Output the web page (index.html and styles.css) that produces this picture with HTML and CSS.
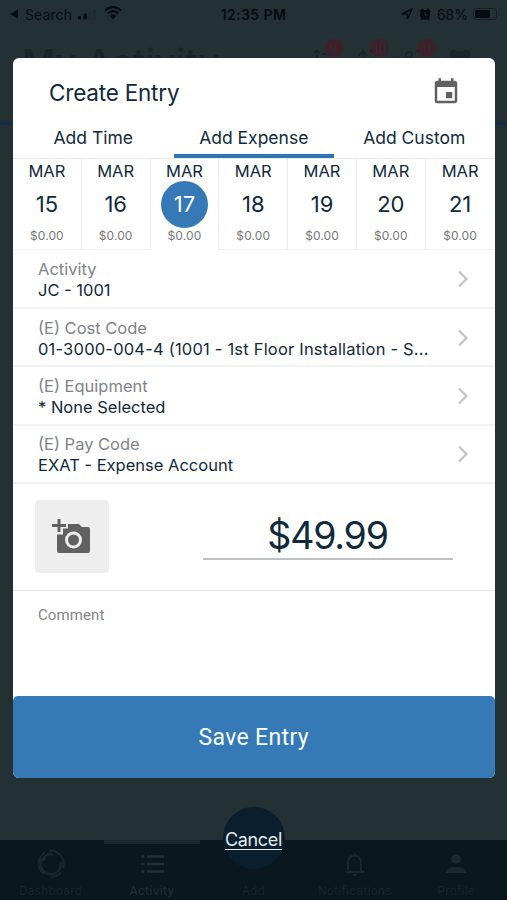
FILE: index.html
```html
<!DOCTYPE html>
<html lang="en">
<head>
<meta charset="utf-8">
<title>Create Entry</title>
<link rel="stylesheet" href="styles.css">
</head>
<body>
<div class="screen">
  <header class="status">
    <div class="status-left">
      <svg width="8" height="10" viewBox="0 0 8 10"><path d="M8 .5v9L0 5z"/></svg>
      <span class="back">Search</span>
      <svg class="signal" width="18" height="10" viewBox="0 0 18 10"><rect y="6" width="3.2" height="3.5" rx="1"/><rect x="5.5" y="3.5" width="3.5" height="6" rx="1"/><path opacity=".12" d="M10.5 2h3v7.500h-3zM15 0h3v9.500h-3z"/></svg>
      <svg class="wifi" width="18" height="14" viewBox="0 0 18 14"><path d="M1 4.500Q9-2.500 17 4.500M3.800 7.500Q9 2.700 14.200 7.500" fill="none" stroke="#070c0e" stroke-width="2.200"/><path d="M5.700 9.800Q9 6.800 12.300 9.800L9 13.500z"/></svg>
    </div>
    <div class="clock">12:35 PM</div>
    <div class="status-right">
      <svg width="12" height="12" viewBox="0 0 12 12"><path d="M1 6L11 1 6.500 11V6z" fill="none" stroke="#070c0e" stroke-width="1.500"/></svg>
      <svg class="alarm" width="12" height="13" viewBox="0 0 12 13"><circle cx="6" cy="7" r="5"/><path d="M1 4L4 1M8 1l3 3M3 10.500L2 12M9 10.500l1 1.500" stroke="#070c0e" stroke-width="2"/><path d="M6 4v3h2.500" fill="none" stroke="#243034"/></svg>
      <span class="percent">68%</span>
      <svg width="27" height="12" viewBox="0 0 27 12"><rect x=".5" y=".5" width="23" height="11" rx="3" fill="none" stroke="#162023"/><rect x="2" y="2" width="15" height="8" rx="1.500"/><path d="M25 4q2 2 0 4z" fill="#162023"/></svg>
    </div>
  </header>

  <section class="page-head">
    <h1>My Activity</h1>
    <div class="tools">
      <div class="tool"><svg width="24" height="24" viewBox="0 0 24 24"><path d="M3 6l3-3 3 3M6 3v9M11 7h5"/></svg><b>9</b></div>
      <div class="tool"><svg width="24" height="24" viewBox="0 0 24 24"><path d="M2 9l4-5 4 5M6 5v7M13 4h5"/></svg><b>10</b></div>
      <div class="tool"><svg width="24" height="24" viewBox="0 0 24 24"><circle cx="5" cy="8" r="3"/><path d="M13 4h5"/></svg><b>11</b></div>
      <div class="tool"><svg width="24" height="24" viewBox="0 0 24 24"><path class="solid" d="M0 5q3-4 6-1h7q4-3 7 1v8H0z"/></svg></div>
    </div>
  </section>
  <main class="page-body"></main>

  <nav class="nav">
    <div class="nav-item"><svg width="32" height="32" viewBox="0 0 32 32"><path d="M9 26A13 13 0 0 1 10 4.500M14 3A13 13 0 0 1 28 20M26 24A13 13 0 0 1 16 29"/><path d="M18 6.500A10 10 0 1 0 25.500 14M10 9L8 13"/></svg><span>Dashboard</span></div>
    <div class="nav-item active"><svg width="32" height="32" viewBox="0 0 32 32"><path d="M11 8.500h17M11 16h17M11 23.500h17M5.500 8.500h3M5.500 16h3M5.500 23.500h3"/></svg><span>Activity</span></div>
    <div class="nav-item"><svg width="32" height="32"></svg><span>Add</span></div>
    <div class="nav-item"><svg width="32" height="32" viewBox="0 0 32 32"><path d="M6 24h19M9 23V15q0-7.500 6.500-7.500T22 15v8M15.500 5v2M13.500 27h4"/></svg><span>Notifications</span></div>
    <div class="nav-item"><svg width="32" height="32" viewBox="0 0 32 32"><g class="solid"><circle cx="16" cy="11" r="4.800"/><path d="M6 25q0-6 10-6t10 6z"/></g></svg><span>Profile</span></div>
  </nav>
  <div class="fab"></div>

  <div class="overlay">
    <div class="dialog">
      <div class="title-row">
        <h2>Create Entry</h2>
        <svg width="30" height="30" viewBox="0 0 24 24"><path fill="#616161" d="M17 12h-5v5h5v-5zM16 1v2H8V1H6v2H5c-1.110 0-1.990.9-1.990 2L3 19a2 2 0 0 0 2 2h14c1.100 0 2-.9 2-2V5c0-1.100-.9-2-2-2h-1V1h-2zm3 18H5V8h14v11z"/></svg>
      </div>
      <div class="tabs">
        <div class="tab">Add Time</div>
        <div class="tab selected">Add Expense</div>
        <div class="tab">Add Custom</div>
      </div>
      <div class="days">
        <div class="day"><span>MAR</span><strong>15</strong><small>$0.00</small></div>
        <div class="day"><span>MAR</span><strong>16</strong><small>$0.00</small></div>
        <div class="day current"><span>MAR</span><strong>17</strong><small>$0.00</small></div>
        <div class="day"><span>MAR</span><strong>18</strong><small>$0.00</small></div>
        <div class="day"><span>MAR</span><strong>19</strong><small>$0.00</small></div>
        <div class="day"><span>MAR</span><strong>20</strong><small>$0.00</small></div>
        <div class="day"><span>MAR</span><strong>21</strong><small>$0.00</small></div>
      </div>
      <div class="field"><div class="field-text"><label>Activity</label><p>JC - 1001</p></div><svg class="chevron" width="12" height="18" viewBox="0 0 12 18"><path d="M2 1.500L9.500 9 2 16.500"/></svg></div>
      <div class="field"><div class="field-text"><label>(E) Cost Code</label><p class="long">01-3000-004-4 (1001 - 1st Floor Installation - S...</p></div><svg class="chevron" width="12" height="18" viewBox="0 0 12 18"><path d="M2 1.500L9.500 9 2 16.500"/></svg></div>
      <div class="field"><div class="field-text"><label>(E) Equipment</label><p>* None Selected</p></div><svg class="chevron" width="12" height="18" viewBox="0 0 12 18"><path d="M2 1.500L9.500 9 2 16.500"/></svg></div>
      <div class="field"><div class="field-text"><label>(E) Pay Code</label><p>EXAT - Expense Account</p></div><svg class="chevron" width="12" height="18" viewBox="0 0 12 18"><path d="M2 1.500L9.500 9 2 16.500"/></svg></div>
      <div class="amount-row">
        <div class="photo"><svg width="40" height="38" viewBox="0 0 40 38"><path fill="#616161" d="M17 5h11l3 3h6q2 0 2 2v22q0 2-2 2H8q-2 0-2-2V15.500h6v-6h5z"/><path fill="#616161" d="M6.500 0h3v5H15v3H9.500v5h-3V8H1V5h5.500z"/><circle cx="22.500" cy="21" r="7" fill="none" stroke="#eee" stroke-width="3"/></svg></div>
        <div class="amount">$49.99</div>
      </div>
      <div class="comment">Comment</div>
      <div class="save">Save Entry</div>
    </div>
    <div class="cancel"><span>Cancel</span></div>
  </div>
</div>
</body>
</html>
```

FILE: styles.css
```css
* { box-sizing: border-box; margin: 0; padding: 0; }
body { width: 507px; height: 900px; overflow: hidden; background: #233034; font-family: Inter, "Liberation Sans", sans-serif; color: #102a3b; }
svg { display: block; flex: none; }
.screen { position: relative; display: flex; flex-direction: column; width: 507px; height: 900px; }

.status { display: grid; grid-template-columns: 1fr 80px 1fr; align-items: center; height: 28px; color: #070c0e; fill: #070c0e; font-size: 14px; }
.status-left, .status-right { display: flex; align-items: center; }
.status-left { padding-left: 10px; }
.back { margin-left: 7px; width: 48px; letter-spacing: .1px; }
.signal { margin-left: 5px; margin-top: 2px; }
.wifi { margin-left: 8px; margin-top: -2px; }
.clock { font-weight: 600; text-align: center; white-space: nowrap; letter-spacing: .4px; }
.status-right { justify-content: flex-end; padding-right: 7px; }
.alarm { margin-left: 6px; }
.percent { margin: 0 5px 0 6px; letter-spacing: 0; }

.page-head { display: flex; justify-content: space-between; height: 97px; padding: 16px 31px 0 22px; border-bottom: 3px solid #152d49; }
.page-head h1 { font-size: 36px; line-height: 36px; font-weight: 500; letter-spacing: .3px; white-space: nowrap; color: #18252a; }
.tools { display: flex; }
.tool { position: relative; width: 46.300px; padding-top: 3px; }
.tool:last-child { width: 26px; }
.tool svg { fill: none; stroke: #192529; stroke-width: 1.500; }
.tool .solid { fill: #18272c; stroke: none; }
.tool b { position: absolute; left: 14px; top: -5px; width: 18px; height: 18px; border-radius: 50%; background: #421f29; color: #272f35; font-size: 13px; line-height: 19px; text-align: center; font-weight: 500; }
.page-body { flex: 1; }

.nav { display: grid; grid-template-columns: repeat(5, 1fr); height: 60px; background: #0a171f; }
.nav-item { display: flex; flex-direction: column; align-items: center; padding-top: 7px; border-top: 1px solid #0a171f; color: #17242a; font-size: 11.500px; line-height: 14px; }
.nav-item svg { fill: none; stroke: #1b272d; stroke-width: 2; }
.nav-item .solid { fill: #1b292f; stroke: none; }
.nav-item span { margin-top: 4px; letter-spacing: .4px; }
.nav-item.active { border-top: 4px solid #1d292d; padding-top: 4px; margin-inline: 3px; color: #202d33; font-weight: 500; }
.nav-item.active svg { stroke: #223036; stroke-width: 2.500; }
.fab { position: absolute; left: 223px; top: 807px; width: 62px; height: 62px; border-radius: 50%; background: #0a1e2d; }

.overlay { position: absolute; inset: 0; display: flex; flex-direction: column; align-items: flex-start; padding: 58px 0 0 13px; }
.dialog { display: flex; flex-direction: column; width: 481.500px; height: 720px; background: #fff; border-radius: 6px; overflow: hidden; }
.title-row { display: flex; align-items: center; justify-content: space-between; height: 62px; padding: 6px 34px 0 36px; }
.title-row h2 { padding-top: 2px; font-size: 22.500px; font-weight: 400; line-height: 30px; letter-spacing: -.2px; }
.tabs { display: grid; grid-template-columns: repeat(3, 1fr); height: 39px; border-bottom: 1px solid #e9eaeb; }
.tab { height: 38px; font-size: 17.500px; line-height: 36px; text-align: center; }
.tab.selected { border-bottom: 4px solid #2d76b5; }
.days { display: grid; grid-template-columns: repeat(7, 1fr); height: 91px; }
.day { display: flex; flex-direction: column; align-items: center; border-right: 1px solid #eee; border-bottom: 1px solid #f0f0f0; }
.day:last-child { border-right: 0; }
.day.current { border-bottom-color: #fff; }
.day span { height: 22px; font-size: 16.500px; line-height: 24px; }
.day strong { width: 47px; height: 47px; border-radius: 50%; font-size: 22px; line-height: 46px; font-weight: 400; text-align: center; }
.day.current strong { background: #3579b7; color: #fff; }
.day small { font-size: 12px; line-height: 15px; color: #777; letter-spacing: .1px; }

.field { display: flex; align-items: center; justify-content: space-between; height: 58.300px; padding: 1px 26px 0 25px; border-bottom: 2px solid #f2f3f3; }
.days + .field { height: 59px; }
.field-text { padding-top: 2px; }
.field-text label, .field-text p { display: block; font-size: 16.500px; line-height: 21px; white-space: nowrap; }
.field-text .long { letter-spacing: .2px; }
.field-text label { color: #808384; }
.chevron path { fill: none; stroke: #c3c3c3; stroke-width: 2.200; }
.amount-row { display: flex; justify-content: space-between; height: 107px; padding: 16.500px 42px 0 22px; border-bottom: 1px solid #e8eaea; }
.photo { width: 74px; height: 73px; padding: 19px 0 0 16px; background: #eee; border-radius: 4px; }
.amount { width: 250px; height: 60px; border-bottom: 2px solid #c0c1c2; text-align: center; font-size: 37.500px; line-height: 71px; letter-spacing: -1.200px; }
.comment { flex: 1; padding: 12px 25px; font-family: Roboto, sans-serif; font-size: 15px; line-height: 24px; letter-spacing: .1px; color: #858585; }
.save { height: 82px; background: #3579b6; border-radius: 5px; color: #f7ffff; font-family: Roboto, sans-serif; font-size: 23px; line-height: 84px; text-align: center; letter-spacing: .35px; }
.cancel { width: 481px; margin-top: 49px; text-align: center; font-size: 18px; line-height: 25px; letter-spacing: -.35px; color: #e4ebed; }
.cancel span { text-decoration: underline; text-underline-offset: 3px; text-decoration-thickness: 1px; }
```
